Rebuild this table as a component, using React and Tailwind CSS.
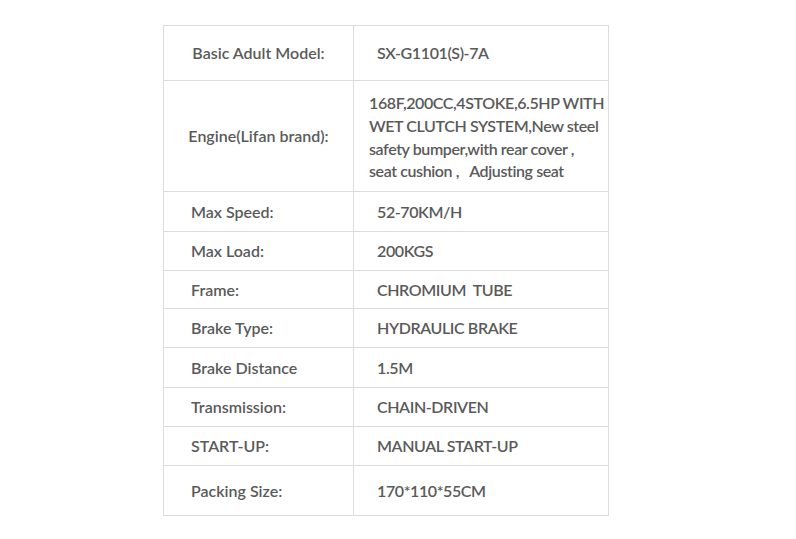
const rows = [
  { label: "Max Speed:", value: "52-70KM/H", h: "h-[40px]" },
  { label: "Max Load:", value: "200KGS", h: "h-[39px]" },
  { label: "Frame:", value: "CHROMIUM\u00a0 TUBE", h: "h-[38px]" },
  { label: "Brake Type:", value: "HYDRAULIC BRAKE", h: "h-[39px]" },
  { label: "Brake Distance", value: "1.5M", h: "h-[40px]" },
  { label: "Transmission:", value: "CHAIN-DRIVEN", h: "h-[39px]" },
  { label: "START-UP:", value: "MANUAL START-UP", h: "h-[39px]" },
  { label: "Packing Size:", value: "170*110*55CM", h: "h-[50px]" },
];

export default function App() {
  return (
    <div className="w-[796px] h-[539px] bg-white pt-[25px] pl-[163px] font-['Lato',sans-serif] text-[#5a5a5a] font-semibold text-[16px]">
      <table className="w-[446px] border-collapse border border-[#dcdcdc]">
        <tbody>
          <tr className="h-[55px]">
            <td className="w-[190px] border border-[#dcdcdc] text-center">Basic Adult Model:</td>
            <td className="border border-[#dcdcdc] pl-[23px] tracking-[-0.4px]">SX-G1101(S)-7A</td>
          </tr>
          <tr className="h-[111px]">
            <td className="border border-[#dcdcdc] text-center">Engine(Lifan brand):</td>
            <td className="border border-[#dcdcdc] pl-[15px] pt-[3px] leading-[22.7px] tracking-[-0.4px] whitespace-nowrap">
              168F,200CC,4STOKE,6.5HP WITH
              <br />
              WET CLUTCH SYSTEM,New steel
              <br />
              safety bumper,with rear cover ,
              <br />
              seat cushion ,&nbsp;&nbsp; Adjusting seat
            </td>
          </tr>
          {rows.map((r) => (
            <tr key={r.label} className={r.h}>
              <td className="border border-[#dcdcdc] pl-[27px]">{r.label}</td>
              <td className="border border-[#dcdcdc] pl-[23px] tracking-[-0.4px]">{r.value}</td>
            </tr>
          ))}
        </tbody>
      </table>
    </div>
  );
}
